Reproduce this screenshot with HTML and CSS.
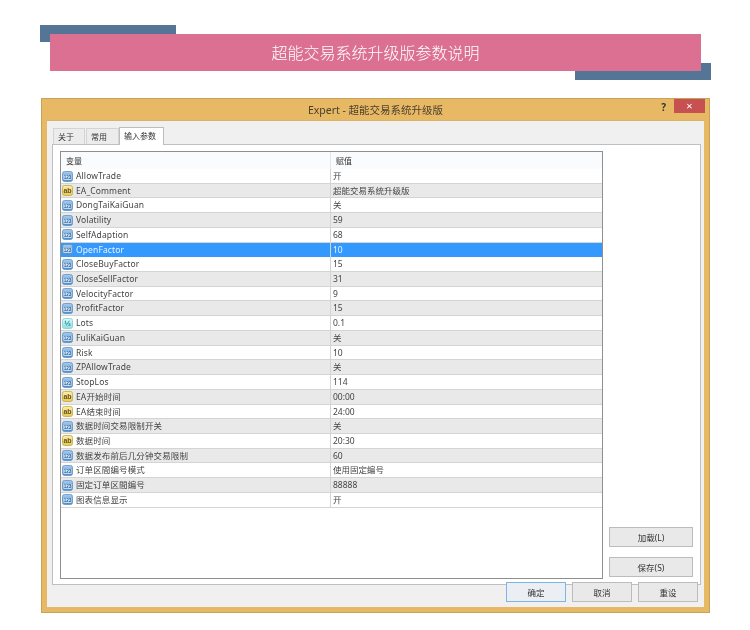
FILE: index.html
```html
<!DOCTYPE html>
<html lang="zh">
<head>
<meta charset="utf-8">
<title>超能交易系统升级版参数说明</title>
<link rel="stylesheet" href="styles.css">
</head>
<body>
<svg class="defs" width="0" height="0">
  <defs>
    <linearGradient id="gb" x1="0" y1="0" x2="0" y2="1"><stop offset="0" stop-color="#a9cdee"/><stop offset="1" stop-color="#4a8bc9"/></linearGradient>
    <linearGradient id="gy" x1="0" y1="0" x2="0" y2="1"><stop offset="0" stop-color="#f8eeb0"/><stop offset="1" stop-color="#e3c95a"/></linearGradient>
    <linearGradient id="gc" x1="0" y1="0" x2="0" y2="1"><stop offset="0" stop-color="#dcf7f7"/><stop offset="1" stop-color="#8fdfe3"/></linearGradient>
    <symbol id="i-num" viewBox="0 0 11 11">
      <rect x="0.5" y="0.5" width="10" height="10" rx="2" fill="url(#gb)" stroke="#5f93c5" stroke-width="0.8"/>
      <rect x="1.5" y="4" width="8" height="4.8" fill="#dbe9f7"/>
      <text class="ico-text ico-text-num" x="5.5" y="8.4">123</text>
    </symbol>
    <symbol id="i-str" viewBox="0 0 11 11">
      <rect x="0.5" y="0.5" width="10" height="10" rx="2" fill="url(#gy)" stroke="#c4a83f" stroke-width="0.8"/>
      <text class="ico-text ico-text-str" x="5.5" y="8.3">ab</text>
    </symbol>
    <symbol id="i-dbl" viewBox="0 0 11 11">
      <rect x="0.5" y="0.5" width="10" height="10" rx="2" fill="url(#gc)" stroke="#7fcdd4" stroke-width="0.8"/>
      <text class="ico-text ico-text-dbl" x="5.5" y="8.2">½</text>
    </symbol>
  </defs>
</svg>

<header class="banner">
  <span class="banner-back banner-back-left"></span>
  <span class="banner-back banner-back-right"></span>
  <h1 class="banner-title">超能交易系统升级版参数说明</h1>
</header>

<main class="window">
  <div class="titlebar">
    <span class="title-text">Expert - 超能交易系统升级版</span>
    <span class="title-help">?</span>
    <span class="title-close">×</span>
  </div>
  <div class="client">
    <div class="tabs">
      <span class="tab">关于</span>
      <span class="tab">常用</span>
      <span class="tab tab-active">输入参数</span>
    </div>
    <div class="panel">
      <div class="grid">
        <div class="grid-head">
          <span class="head-name">变量</span>
          <span class="head-value">赋值</span>
        </div>
        <div class="row"><span class="name"><svg class="ico"><use href="#i-num"/></svg>AllowTrade</span><span class="value">开</span></div>
        <div class="row alt"><span class="name"><svg class="ico"><use href="#i-str"/></svg>EA_Comment</span><span class="value">超能交易系统升级版</span></div>
        <div class="row"><span class="name"><svg class="ico"><use href="#i-num"/></svg>DongTaiKaiGuan</span><span class="value">关</span></div>
        <div class="row alt"><span class="name"><svg class="ico"><use href="#i-num"/></svg>Volatility</span><span class="value">59</span></div>
        <div class="row"><span class="name"><svg class="ico"><use href="#i-num"/></svg>SelfAdaption</span><span class="value">68</span></div>
        <div class="row selected"><span class="name"><svg class="ico"><use href="#i-num"/></svg>OpenFactor</span><span class="value">10</span></div>
        <div class="row"><span class="name"><svg class="ico"><use href="#i-num"/></svg>CloseBuyFactor</span><span class="value">15</span></div>
        <div class="row alt"><span class="name"><svg class="ico"><use href="#i-num"/></svg>CloseSellFactor</span><span class="value">31</span></div>
        <div class="row"><span class="name"><svg class="ico"><use href="#i-num"/></svg>VelocityFactor</span><span class="value">9</span></div>
        <div class="row alt"><span class="name"><svg class="ico"><use href="#i-num"/></svg>ProfitFactor</span><span class="value">15</span></div>
        <div class="row"><span class="name"><svg class="ico"><use href="#i-dbl"/></svg>Lots</span><span class="value">0.1</span></div>
        <div class="row alt"><span class="name"><svg class="ico"><use href="#i-num"/></svg>FuliKaiGuan</span><span class="value">关</span></div>
        <div class="row"><span class="name"><svg class="ico"><use href="#i-num"/></svg>Risk</span><span class="value">10</span></div>
        <div class="row alt"><span class="name"><svg class="ico"><use href="#i-num"/></svg>ZPAllowTrade</span><span class="value">关</span></div>
        <div class="row"><span class="name"><svg class="ico"><use href="#i-num"/></svg>StopLos</span><span class="value">114</span></div>
        <div class="row alt"><span class="name"><svg class="ico"><use href="#i-str"/></svg>EA开始时间</span><span class="value">00:00</span></div>
        <div class="row"><span class="name"><svg class="ico"><use href="#i-str"/></svg>EA结束时间</span><span class="value">24:00</span></div>
        <div class="row alt"><span class="name"><svg class="ico"><use href="#i-num"/></svg>数据时间交易限制开关</span><span class="value">关</span></div>
        <div class="row"><span class="name"><svg class="ico"><use href="#i-str"/></svg>数据时间</span><span class="value">20:30</span></div>
        <div class="row alt"><span class="name"><svg class="ico"><use href="#i-num"/></svg>数据发布前后几分钟交易限制</span><span class="value">60</span></div>
        <div class="row"><span class="name"><svg class="ico"><use href="#i-num"/></svg>订单区間编号模式</span><span class="value">使用固定编号</span></div>
        <div class="row alt"><span class="name"><svg class="ico"><use href="#i-num"/></svg>固定订单区間编号</span><span class="value">88888</span></div>
        <div class="row"><span class="name"><svg class="ico"><use href="#i-num"/></svg>图表信息显示</span><span class="value">开</span></div>
      </div>
      <div class="side">
        <button class="btn side-btn">加载(L)</button>
        <button class="btn side-btn">保存(S)</button>
      </div>
    </div>
    <div class="footer">
      <button class="btn foot-btn foot-primary">确定</button>
      <button class="btn foot-btn">取消</button>
      <button class="btn foot-btn">重设</button>
      <span class="grip"></span>
    </div>
  </div>
</main>
</body>
</html>
```
FILE: styles.css
```css
* { box-sizing: border-box; }
html { margin: 0; padding: 0; background: #fff; }
body {
  margin: 0;
  width: 750px;
  height: 630px;
  overflow: hidden;
  padding-top: 34px;
  font-family: "Noto Sans", "Noto Sans CJK SC", sans-serif;
}
.defs { position: absolute; }

.banner {
  position: relative;
  width: 651px;
  height: 37px;
  margin-left: 50px;
  background: #dc7093;
  display: flex;
  align-items: center;
  justify-content: center;
}
.banner-back {
  position: absolute;
  width: 136px;
  height: 17px;
  background: #557596;
  z-index: -1;
}
.banner-back-left { left: -10px; top: -9px; }
.banner-back-right { right: -10px; bottom: -9px; }
.banner-title {
  margin: 0;
  font-family: "Noto Sans CJK SC", sans-serif;
  font-size: 16px;
  font-weight: 300;
  color: #fff;
  line-height: 37px;
  filter: blur(0.25px);
}

.window {
  width: 669px;
  height: 515px;
  margin: 27px 0 0 41px;
  background: #e8b964;
  border: 1px solid #c9a25a;
  padding: 0 5px 5px;
  display: flex;
  flex-direction: column;
  color: #333;
  font-size: 8.5px;
  filter: blur(0.3px);
}
.titlebar {
  position: relative;
  height: 21px;
  flex: none;
  display: flex;
  justify-content: center;
  align-items: center;
}
.title-text {
  font-size: 10.5px;
  color: #4a4030;
  font-family: "Noto Sans", "Noto Sans CJK SC", sans-serif;
}
.title-help {
  position: absolute;
  right: 38px;
  top: 1px;
  font-size: 10px;
  font-weight: 700;
  color: #333;
  line-height: 14px;
}
.title-close {
  position: absolute;
  right: -1px;
  top: 0;
  width: 31px;
  height: 14px;
  background: #c75050;
  color: #fff;
  font-size: 11px;
  line-height: 13px;
  text-align: center;
}
.client {
  flex: 1;
  background: #f0f0f0;
  border-top: 1px solid #d8b26b;
  padding: 5px 3px 0 5px;
  display: flex;
  flex-direction: column;
  min-height: 0;
}
.tabs {
  display: flex;
  height: 18px;
  flex: none;
  align-items: flex-end;
  padding-left: 1px;
  gap: 1px;
  position: relative;
  z-index: 1;
}
.tab {
  height: 16px;
  padding: 0 4px;
  width: 33px;
  background: #ececec;
  border: 1px solid #d4d4d4;
  border-bottom: none;
  font-size: 8px;
  line-height: 15px;
  color: #333;
}
.tab:first-child { width: 32px; }
.tab-active {
  width: 45px;
  height: 18px;
  margin-left: -1px;
  background: #fff;
  border-color: #bdbdbd;
  line-height: 16px;
  margin-bottom: -1px;
}
.panel {
  flex: none;
  height: 441px;
  background: #fff;
  border: 1px solid #bfbfbf;
  padding: 6px 7px 5px 7px;
  display: flex;
  justify-content: space-between;
}
.grid {
  width: 543px;
  height: 428px;
  border: 1px solid #8f8f8f;
  background: #fff;
}
.grid-head {
  height: 17px;
  display: grid;
  grid-template-columns: 269px 1fr;
  background: #fafbfc;
  line-height: 17px;
  font-size: 8px;
}
.head-name { padding-left: 5px; }
.head-value { padding-left: 5px; border-left: 1px solid #e3e7ee; }
.row {
  height: 14.73px;
  display: grid;
  grid-template-columns: 269px 1fr;
  align-items: stretch;
  border-bottom: 1px solid #d4d4d4;
  line-height: 14px;
  font-size: 8.5px;
  color: #444;
}
.alt { background: #e9e9e9; }
.selected { background: #3399ff; color: #eaf4ff; border-bottom-color: #3399ff; }
.name {
  display: flex;
  align-items: center;
  white-space: nowrap;
  letter-spacing: 0.12px;
}
.ico {
  width: 11px;
  height: 11px;
  margin: 0 3px 0 1px;
  flex: none;
}
.ico-text {
  font-family: "Liberation Sans", sans-serif;
  font-weight: 700;
  text-anchor: middle;
  letter-spacing: 0;
}
.ico-text-num { font-size: 4.6px; fill: #1d5a9c; }
.ico-text-str { font-size: 7px; fill: #6b5312; }
.ico-text-dbl { font-size: 8px; fill: #1f8a96; }
.value {
  padding-left: 2px;
  border-left: 1px solid #d4d4d4;
  white-space: nowrap;
}
.side {
  width: 84px;
  height: 428px;
  display: flex;
  flex-direction: column;
  justify-content: flex-end;
  gap: 10px;
  padding-bottom: 2px;
}
.btn {
  font-family: inherit;
  font-size: 8.5px;
  color: #333;
  background: #e9e9e9;
  border: 1px solid #bcbcbc;
  padding: 0;
  margin: 0;
}
.side-btn { width: 84px; height: 20px; }
.footer {
  display: flex;
  justify-content: flex-end;
  gap: 6px;
  margin-top: -3px;
  padding-right: 3px;
  position: relative;
}
.foot-btn { width: 60px; height: 20px; }
.foot-primary { border-color: #7eb4ea; background: #ebeff3; }
.grip {
  position: absolute;
  right: 0;
  bottom: -3px;
  width: 5px;
  height: 5px;
  opacity: 0.5;
  background: radial-gradient(circle at 1px 1px, #b5b5b5 0.6px, transparent 0.7px) 0 0 / 2px 2px;
}
```
